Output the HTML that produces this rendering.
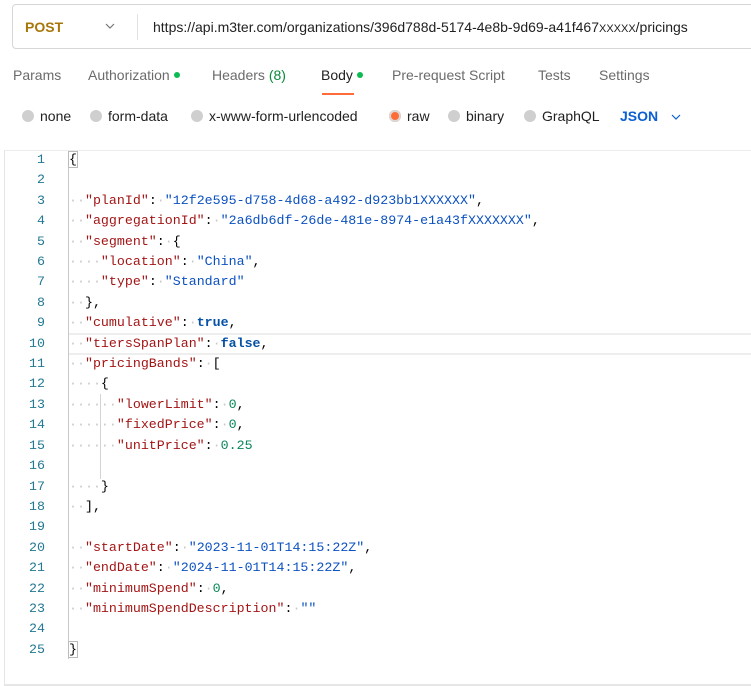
<!DOCTYPE html>
<html><head><style>
body{margin:0;width:751px;height:685px;background:#fff;overflow:hidden;font-family:"Liberation Sans",sans-serif;position:relative}
.abs{position:absolute;white-space:nowrap}
.url{position:absolute;left:12px;top:4px;width:760px;height:45px;border:1px solid #d6d6d6;border-radius:4px;box-sizing:border-box}
.tab{position:absolute;top:67px;font-size:14px;color:#6b6b6b}
.dot{display:inline-block;width:6px;height:6px;border-radius:50%;background:#0cbb52;margin-left:4px;vertical-align:2px}
.r{position:absolute;top:108px;font-size:14px;color:#212121}
.r i{display:inline-block;width:12px;height:12px;border-radius:50%;background:#cfcfcf;vertical-align:-1px;margin-right:6px}
.ed{position:absolute;left:4px;top:150px;width:760px;height:533px;border-left:1px solid #e6e6e6;border-top:1px solid #ececec;border-bottom:2px solid #e6e6e6}
.ln{position:absolute;left:0;width:45px;text-align:right;font:13.3px/20.4px "Liberation Mono",monospace;color:#237893}
.code{position:absolute;left:69px;top:150px;font:13.3px/20.4px "Liberation Mono",monospace;color:#000;white-space:pre}
.k{color:#a31515}.s{color:#0b51c1}.n{color:#098658}.b{color:#0451a5;font-weight:bold}.w{color:#c8c8c8}
</style></head><body>
<div class="url"></div>
<div class="abs" style="left:25px;top:19px;font-size:14px;font-weight:bold;color:#a8770a">POST</div>
<svg class="abs" style="left:105px;top:23px" width="10" height="7"><path d="M1 1l4 4 4-4" stroke="#777" fill="none" stroke-width="1.2"/></svg>
<div class="abs" style="left:137px;top:14px;width:1px;height:26px;background:#e3e3e3"></div>
<div class="abs" style="left:153px;top:19px;font-size:14px;color:#212121">https://api.m3ter.com/organizations/396d788d-5174-4e8b-9d69-a41f467<span style="font-size:11px">XXXXX</span>/pricings</div>
<div class="tab" style="left:13px">Params</div>
<div class="tab" style="left:88px">Authorization<span class="dot"></span></div>
<div class="tab" style="left:212px">Headers <span style="color:#0a8a3a">(8)</span></div>
<div class="tab" style="left:321px;color:#212121">Body<span class="dot"></span></div>
<div class="abs" style="left:322px;top:93px;width:32px;height:2px;background:#ff6c37"></div>
<div class="tab" style="left:392px">Pre-request Script</div>
<div class="tab" style="left:538px">Tests</div>
<div class="tab" style="left:599px">Settings</div>
<div class="r" style="left:22px"><i></i>none</div>
<div class="r" style="left:90px"><i></i>form-data</div>
<div class="r" style="left:191px"><i></i>x-www-form-urlencoded</div>
<div class="r" style="left:389px"><i style="background:#ff6c37;box-shadow:inset 0 0 0 2px #d9d9d9"></i>raw</div>
<div class="r" style="left:448px"><i></i>binary</div>
<div class="r" style="left:524px"><i></i>GraphQL</div>
<div class="r" style="left:620px;color:#0b5fd1;font-weight:bold">JSON</div>
<svg class="abs" style="left:671px;top:114px" width="10" height="7"><path d="M1 1l4 4 4-4" stroke="#0b5fd1" fill="none" stroke-width="1.2"/></svg>
<div class="ed"></div>
<div class="abs" style="left:68px;top:151px;width:1px;height:508px;background:#c8c8c8"></div>
<div class="abs" style="left:69px;top:333px;width:690px;height:18px;border-top:2px solid #eee;border-bottom:2px solid #eee"></div>
<div class="abs" style="left:100px;top:394px;width:1px;height:85px;background:#d4d4d4"></div>
<div class="ln" style="top:150px">1<br>2<br>3<br>4<br>5<br>6<br>7<br>8<br>9<br>10<br>11<br>12<br>13<br>14<br>15<br>16<br>17<br>18<br>19<br>20<br>21<br>22<br>23<br>24<br>25</div>
<div class="code"><span style="outline:1px solid #bbb">{</span>

<span class="w">··</span><span class="k">"planId"</span>:<span class="w">·</span><span class="s">"12f2e595-d758-4d68-a492-d923bb1XXXXXX"</span>,
<span class="w">··</span><span class="k">"aggregationId"</span>:<span class="w">·</span><span class="s">"2a6db6df-26de-481e-8974-e1a43fXXXXXXX"</span>,
<span class="w">··</span><span class="k">"segment"</span>:<span class="w">·</span>{
<span class="w">····</span><span class="k">"location"</span>:<span class="w">·</span><span class="s">"China"</span>,
<span class="w">····</span><span class="k">"type"</span>:<span class="w">·</span><span class="s">"Standard"</span>
<span class="w">··</span>},
<span class="w">··</span><span class="k">"cumulative"</span>:<span class="w">·</span><span class="b">true</span>,
<span class="w">··</span><span class="k">"tiersSpanPlan"</span>:<span class="w">·</span><span class="b">false</span>,
<span class="w">··</span><span class="k">"pricingBands"</span>:<span class="w">·</span>[
<span class="w">····</span>{
<span class="w">······</span><span class="k">"lowerLimit"</span>:<span class="w">·</span><span class="n">0</span>,
<span class="w">······</span><span class="k">"fixedPrice"</span>:<span class="w">·</span><span class="n">0</span>,
<span class="w">······</span><span class="k">"unitPrice"</span>:<span class="w">·</span><span class="n">0.25</span>

<span class="w">····</span>}
<span class="w">··</span>],

<span class="w">··</span><span class="k">"startDate"</span>:<span class="w">·</span><span class="s">"2023-11-01T14:15:22Z"</span>,
<span class="w">··</span><span class="k">"endDate"</span>:<span class="w">·</span><span class="s">"2024-11-01T14:15:22Z"</span>,
<span class="w">··</span><span class="k">"minimumSpend"</span>:<span class="w">·</span><span class="n">0</span>,
<span class="w">··</span><span class="k">"minimumSpendDescription"</span>:<span class="w">·</span><span class="s">""</span>

<span style="outline:1px solid #bbb">}</span></div>
</body></html>
